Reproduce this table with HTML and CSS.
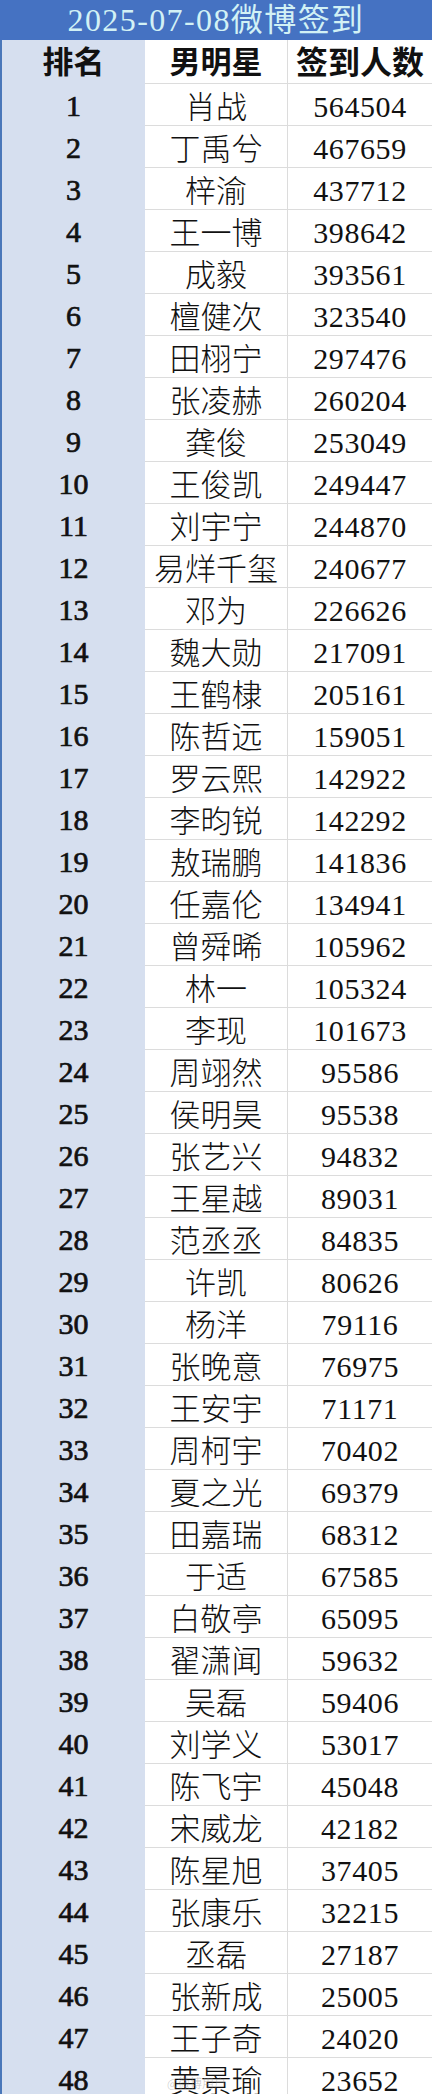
FILE: index.html
```html
<!DOCTYPE html>
<html lang="zh-CN">
<head>
<meta charset="utf-8">
<title>2025-07-08微博签到</title>
<link rel="stylesheet" href="styles.css">
</head>
<body>
<div class="sheet">
  <div class="title">2025-07-08微博签到</div>
  <div class="table">
    <div class="row head"><div class="c rank">排名</div><div class="c name">男明星</div><div class="c num">签到人数</div></div>
    <div class="row"><div class="c rank">1</div><div class="c name">肖战</div><div class="c num">564504</div></div>
    <div class="row"><div class="c rank">2</div><div class="c name">丁禹兮</div><div class="c num">467659</div></div>
    <div class="row"><div class="c rank">3</div><div class="c name">梓渝</div><div class="c num">437712</div></div>
    <div class="row"><div class="c rank">4</div><div class="c name">王一博</div><div class="c num">398642</div></div>
    <div class="row"><div class="c rank">5</div><div class="c name">成毅</div><div class="c num">393561</div></div>
    <div class="row"><div class="c rank">6</div><div class="c name">檀健次</div><div class="c num">323540</div></div>
    <div class="row"><div class="c rank">7</div><div class="c name">田栩宁</div><div class="c num">297476</div></div>
    <div class="row"><div class="c rank">8</div><div class="c name">张凌赫</div><div class="c num">260204</div></div>
    <div class="row"><div class="c rank">9</div><div class="c name">龚俊</div><div class="c num">253049</div></div>
    <div class="row"><div class="c rank">10</div><div class="c name">王俊凯</div><div class="c num">249447</div></div>
    <div class="row"><div class="c rank">11</div><div class="c name">刘宇宁</div><div class="c num">244870</div></div>
    <div class="row"><div class="c rank">12</div><div class="c name">易烊千玺</div><div class="c num">240677</div></div>
    <div class="row"><div class="c rank">13</div><div class="c name">邓为</div><div class="c num">226626</div></div>
    <div class="row"><div class="c rank">14</div><div class="c name">魏大勋</div><div class="c num">217091</div></div>
    <div class="row"><div class="c rank">15</div><div class="c name">王鹤棣</div><div class="c num">205161</div></div>
    <div class="row"><div class="c rank">16</div><div class="c name">陈哲远</div><div class="c num">159051</div></div>
    <div class="row"><div class="c rank">17</div><div class="c name">罗云熙</div><div class="c num">142922</div></div>
    <div class="row"><div class="c rank">18</div><div class="c name">李昀锐</div><div class="c num">142292</div></div>
    <div class="row"><div class="c rank">19</div><div class="c name">敖瑞鹏</div><div class="c num">141836</div></div>
    <div class="row"><div class="c rank">20</div><div class="c name">任嘉伦</div><div class="c num">134941</div></div>
    <div class="row"><div class="c rank">21</div><div class="c name">曾舜晞</div><div class="c num">105962</div></div>
    <div class="row"><div class="c rank">22</div><div class="c name">林一</div><div class="c num">105324</div></div>
    <div class="row"><div class="c rank">23</div><div class="c name">李现</div><div class="c num">101673</div></div>
    <div class="row"><div class="c rank">24</div><div class="c name">周翊然</div><div class="c num">95586</div></div>
    <div class="row"><div class="c rank">25</div><div class="c name">侯明昊</div><div class="c num">95538</div></div>
    <div class="row"><div class="c rank">26</div><div class="c name">张艺兴</div><div class="c num">94832</div></div>
    <div class="row"><div class="c rank">27</div><div class="c name">王星越</div><div class="c num">89031</div></div>
    <div class="row"><div class="c rank">28</div><div class="c name">范丞丞</div><div class="c num">84835</div></div>
    <div class="row"><div class="c rank">29</div><div class="c name">许凯</div><div class="c num">80626</div></div>
    <div class="row"><div class="c rank">30</div><div class="c name">杨洋</div><div class="c num">79116</div></div>
    <div class="row"><div class="c rank">31</div><div class="c name">张晚意</div><div class="c num">76975</div></div>
    <div class="row"><div class="c rank">32</div><div class="c name">王安宇</div><div class="c num">71171</div></div>
    <div class="row"><div class="c rank">33</div><div class="c name">周柯宇</div><div class="c num">70402</div></div>
    <div class="row"><div class="c rank">34</div><div class="c name">夏之光</div><div class="c num">69379</div></div>
    <div class="row"><div class="c rank">35</div><div class="c name">田嘉瑞</div><div class="c num">68312</div></div>
    <div class="row"><div class="c rank">36</div><div class="c name">于适</div><div class="c num">67585</div></div>
    <div class="row"><div class="c rank">37</div><div class="c name">白敬亭</div><div class="c num">65095</div></div>
    <div class="row"><div class="c rank">38</div><div class="c name">翟潇闻</div><div class="c num">59632</div></div>
    <div class="row"><div class="c rank">39</div><div class="c name">吴磊</div><div class="c num">59406</div></div>
    <div class="row"><div class="c rank">40</div><div class="c name">刘学义</div><div class="c num">53017</div></div>
    <div class="row"><div class="c rank">41</div><div class="c name">陈飞宇</div><div class="c num">45048</div></div>
    <div class="row"><div class="c rank">42</div><div class="c name">宋威龙</div><div class="c num">42182</div></div>
    <div class="row"><div class="c rank">43</div><div class="c name">陈星旭</div><div class="c num">37405</div></div>
    <div class="row"><div class="c rank">44</div><div class="c name">张康乐</div><div class="c num">32215</div></div>
    <div class="row"><div class="c rank">45</div><div class="c name">丞磊</div><div class="c num">27187</div></div>
    <div class="row"><div class="c rank">46</div><div class="c name">张新成</div><div class="c num">25005</div></div>
    <div class="row"><div class="c rank">47</div><div class="c name">王子奇</div><div class="c num">24020</div></div>
    <div class="row last"><div class="c rank">48</div><div class="c name">黄景瑜<span class="wm">@微博用户</span></div><div class="c num">23652</div></div>
  </div>
</div>
</body>
</html>
```

FILE: styles.css
```css
html, body {
  margin: 0;
  padding: 0;
  background: #ffffff;
}
body {
  width: 432px;
  overflow: hidden;
  font-family: "Liberation Serif", "Noto Sans CJK SC", serif;
  color: #111111;
}
.sheet {
  width: 432px;
}
.title {
  height: 40px;
  background: #4572c2;
  color: #d2f1f5;
  font-family: "Liberation Serif", "Noto Sans CJK SC", serif;
  font-size: 32px;
  line-height: 38px;
  letter-spacing: 1.4px;
  text-align: center;
  white-space: nowrap;
  padding-top: 1px;
  box-sizing: border-box;
}
.table {
  border-left: 2px solid #4a77b9;
}
.row {
  display: grid;
  grid-template-columns: 143px 143px 144px;
  height: 42px;
}
.row.head {
  height: 43px;
}
.c {
  box-sizing: border-box;
  text-align: center;
  white-space: nowrap;
  padding-top: 5px;
  line-height: 36px;
}
.rank {
  background: #d6dfef;
  font-weight: normal;
  font-size: 30px;
  -webkit-text-stroke: 0.7px #111111;
}
.name {
  position: relative;
  border-top: 1px solid #dcdcdc;
  border-right: 1px solid #dcdcdc;
  font-family: "Noto Sans CJK SC", sans-serif;
  font-size: 31px;
  font-weight: 300;
  padding-top: 3px;
}
.num {
  border-top: 1px solid #dcdcdc;
  font-size: 30px;
  letter-spacing: 0.6px;
}
.head .c {
  border-top: none;
  padding-top: 2px;
  font-family: "Noto Sans CJK SC", sans-serif;
  font-weight: bold;
  font-size: 31px;
  -webkit-text-stroke: 0;
}
.head .num {
  font-size: 32px;
  letter-spacing: 0;
}
.wm {
  position: absolute;
  left: 22px;
  top: 18px;
  font-family: "Noto Sans CJK SC", sans-serif;
  font-size: 12px;
  line-height: 14px;
  color: rgba(150, 150, 150, 0.55);
  letter-spacing: 0;
}
```
